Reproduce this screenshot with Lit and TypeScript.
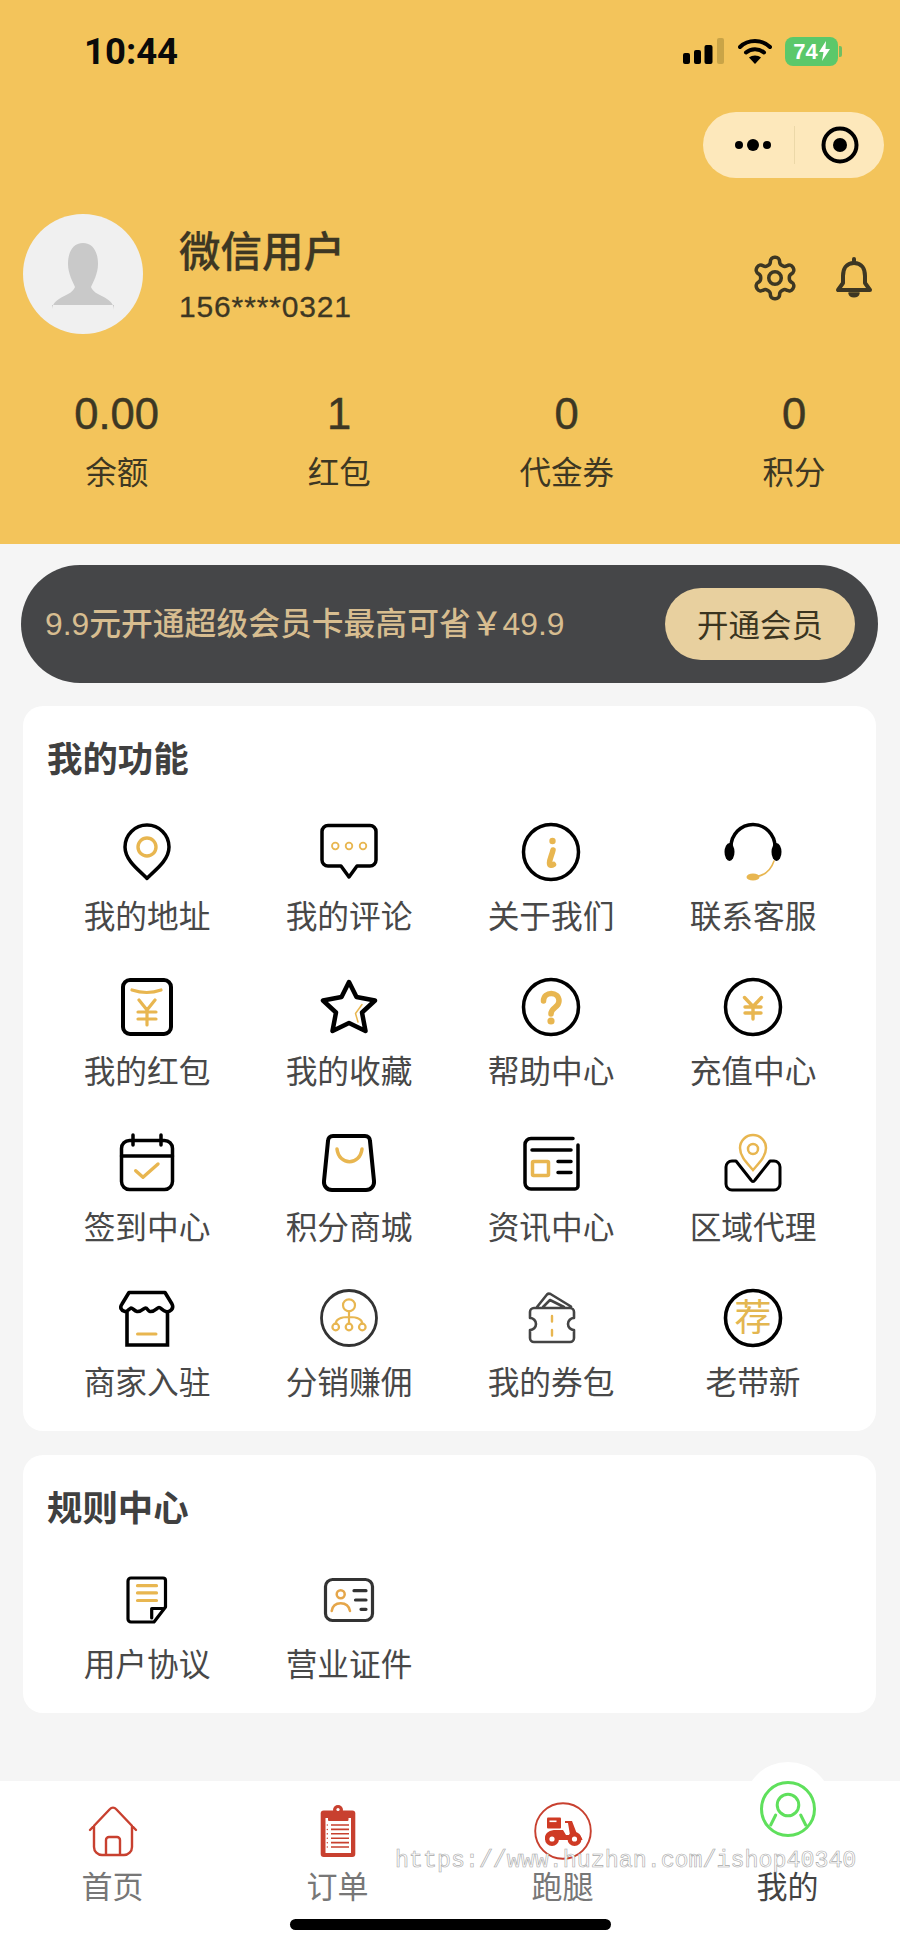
import { LitElement, html, css, svg } from "lit";
import { customElement } from "lit/decorators.js";

const K = "#000";
const G = "#e8b650";
const R = "#c8402f";

const g = (strokeColor: string, w: number, content: unknown) =>
  svg`<g fill="none" stroke=${strokeColor} stroke-width=${w} stroke-linecap="round" stroke-linejoin="round">${content}</g>`;

const icons: Record<string, unknown> = {
  addr: svg`${g(K, 3.5, svg`<path d="M30 56.5C26 51 8 40 8 25a22 22 0 0 1 44 0C52 40 34 51 30 56.5Z"/>`)}${g(G, 3.4, svg`<circle cx="30" cy="25" r="9"/>`)}`,
  comment: svg`${g(K, 3.5, svg`<path d="M9 3.5H51a6 6 0 0 1 6 6V38a6 6 0 0 1-6 6H38L30 55 22 44H9a6 6 0 0 1-6-6V9.5a6 6 0 0 1 6-6Z"/>`)}${g(G, 1.8, svg`<circle cx="16.3" cy="24" r="3.3"/><circle cx="30" cy="24" r="3.3"/><circle cx="44" cy="24" r="3.3"/>`)}`,
  info: svg`${g(K, 3.5, svg`<circle cx="30" cy="30" r="27.5"/>`)}<circle cx="31.5" cy="19" r="3.2" fill=${G}/>${g(G, 5.5, svg`<path d="M32 28C31 33 28.5 37 28.5 41C28.5 44 31 43.5 32.5 42.5"/>`)}`,
  headset: svg`${g(K, 3.5, svg`<path d="M8 25A22 22.5 0 0 1 52 25"/>`)}<ellipse cx="6.5" cy="30" rx="5" ry="9" fill=${K}/><ellipse cx="53.5" cy="30" rx="5" ry="9" fill=${K}/>${g(G, 1.6, svg`<path d="M51 39C48 48 42 53 34 54.5"/>`)}<ellipse cx="30" cy="55" rx="6.5" ry="3.6" fill=${G}/>`,
  packet: svg`${g(K, 4, svg`<rect x="6" y="3" width="48" height="54" rx="7"/>`)}${g(G, 3.2, svg`<path d="M15 13Q30 18 44 13M22 23L30 33L38 23M21 35H39M21 42H39M30 33V48"/>`)}`,
  star: svg`${g(K, 4.5, svg`<path d="M30 5L37.5 20L56 23.5L43 35.5L46.5 54L30 46L13.5 54L17 35.5L4 23.5L22.5 20Z"/>`)}${g(G, 1.5, svg`<path d="M43 27.5L36.5 36.5L39 45"/>`)}`,
  help: svg`${g(K, 3.5, svg`<circle cx="30" cy="30" r="27.5"/>`)}${g(G, 5.5, svg`<path d="M22.5 24C22.5 14 38 14 38 24C38 31 30 30 30 37"/>`)}<circle cx="30" cy="44" r="3.6" fill=${G}/>`,
  recharge: svg`${g(K, 3.5, svg`<circle cx="30" cy="30" r="27.5"/>`)}${g(G, 3.4, svg`<path d="M21.5 20.5L30 29.5L38.5 20.5M22 30H38M22 36H38M30 29.5V42"/>`)}`,
  calendar: svg`${g(K, 3.5, svg`<rect x="4.5" y="7.5" width="51" height="49" rx="8"/><path d="M4.5 23H55.5M16 2V12M44 2V12"/>`)}${g(G, 3.4, svg`<path d="M18.7 37.7L26 44.3L41 31"/>`)}`,
  bag: svg`${g(K, 4, svg`<path d="M14 3H46C49 3 51 5 51 8L55 48C55.5 53 52 57 47 57H13C8 57 4.5 53 5 48L9 8C9 5 11 3 14 3Z"/>`)}${g(G, 3.5, svg`<path d="M18 16C20 33 41 33 43 16"/>`)}`,
  news: svg`${g(K, 3.5, svg`<path d="M52 5.5H10a6 6 0 0 0-6 6V50a6 6 0 0 0 6 6H54a3 3 0 0 0 3-3V12M11 17H50M37 28.5H50M37 39.5H50"/>`)}${g(G, 3.5, svg`<rect x="11.5" y="28.5" width="16" height="14" rx="1"/>`)}`,
  agent: svg`${g(K, 3, svg`<path d="M9 28H13L28 47Q30 50 32 47L47 28H51a6 6 0 0 1 6 6V51a6 6 0 0 1-6 6H9a6 6 0 0 1-6-6V34a6 6 0 0 1 6-6Z"/>`)}<g fill="#fff" stroke=${G} stroke-width="2.5"><path d="M30 37C25 31 17 24 17 15a13 13 0 0 1 26 0C43 24 35 31 30 37Z"/><circle cx="30" cy="16" r="5"/></g>`,
  store: svg`${g(K, 3.6, svg`<path d="M12 4.5H48L55 16C57.5 20.5 53 24.5 49 23.5C45.5 22.5 44 19.5 42 19.5C40 19.5 38 24 33 23.5C31 23.2 30.5 20 28.5 20C26.5 20 25 24 20 23.5C17 23 16 20 14 20C12 21 10 24 8 23.5C4 22.5 2.5 19.5 5 16Z"/><path d="M10 24V57H50.5V24" stroke-linecap="butt" stroke-linejoin="miter"/>`)}${g(G, 3, svg`<path d="M20.5 46H39"/>`)}`,
  share: svg`${g("#333", 2.8, svg`<circle cx="30" cy="30" r="27.5"/>`)}${g(G, 2.2, svg`<circle cx="30" cy="17.3" r="6"/><circle cx="16.7" cy="39" r="3.3"/><circle cx="30" cy="39" r="3.3"/><circle cx="43.3" cy="39" r="3.3"/><path d="M30 23.3V35.7M16.7 35.7C17 30 24 29 30 29C36 29 43 30 43.3 35.7"/>`)}`,
  wallet: svg`${g("#444", 2.6, svg`<path d="M13 20H49a4 4 0 0 1 4 4V30a6 6 0 0 0 0 12V50a4 4 0 0 1-4 4H13a4 4 0 0 1-4-4V42a6 6 0 0 0 0-12V24a4 4 0 0 1 4-4ZM16 19L26 6.5Q27.5 5 29.5 6L50 18.5M22 19L29 12L43 19"/>`)}${g(G, 2.4, svg`<path d="M31 28V33.5M31 42V47.5"/>`)}`,
  recommend: svg`${g(K, 3.6, svg`<circle cx="30" cy="30" r="27.5"/>`)}<text class="rec" x="30" y="43" text-anchor="middle" fill="#e3b650">荐</text>`,
  doc: svg`${g(K, 3.2, svg`<path d="M14 8H46a2.5 2.5 0 0 1 2.5 2.5V37L37 52H14a3 3 0 0 1-3-3V11a3 3 0 0 1 3-3ZM34.7 48V38.5H45.5"/>`)}${g(G, 3.2, svg`<path d="M20.5 15.7H39.5M20.5 22.9H39.5M20.5 30.5H39.5"/>`)}`,
  license: svg`${g("#333", 3.2, svg`<rect x="6.5" y="9.5" width="47" height="41" rx="7"/><path d="M35 20.7H47M36.5 30H47M42 39.3H47"/>`)}${g("#e5a64a", 2.5, svg`<circle cx="21.7" cy="24.3" r="4"/><path d="M12.7 41C13.5 36 17 33.3 21.7 33.3C26.5 33.3 30 36 31 41"/>`)}`,
  home: g(R, 2.4, svg`<path d="M7 29L27 8a4 4 0 0 1 6 0L53 29M11 25V46a8 8 0 0 0 8 8H41a8 8 0 0 0 8-8V25M23 54V39a3 3 0 0 1 3-3H34a3 3 0 0 1 3 3V54"/>`),
  orders: svg`<rect x="12.7" y="9.5" width="34.6" height="46.5" rx="3" fill=${R}/><rect x="17.5" y="17" width="25.5" height="35" fill="#fff"/><circle cx="30" cy="9" r="5" fill=${R}/><circle cx="30" cy="8.5" r="1.6" fill="#fff"/><rect x="20" y="13" width="20.5" height="7" rx="1" fill=${R}/>${g(R, 1.6, svg`<path d="M23 24H41M23 28.4H41M23 32.8H41M23 37.2H41M23 41.6H41M23 46H41" stroke-linecap="butt"/><path d="M19.3 24V24.1M19.3 28.4V28.5M19.3 32.8V32.9M19.3 37.2V37.3M19.3 41.6V41.7M19.3 46V46.1" stroke-width="1.4"/>`)}`,
  runner: svg`${g(R, 1.9, svg`<circle cx="30" cy="30" r="27.8"/>`)}<g fill="#cf3a24"><rect x="14" y="16.5" width="14" height="11" rx="1"/><path d="M12 37C12 31.5 17 29 23 29H30L33 34H37L35 22H32V20H39L44 33C47 34 49 36 49.5 39H12Z"/><circle cx="19" cy="38" r="7"/><circle cx="41.5" cy="38" r="7"/></g><g fill="#fff"><rect x="16.5" y="19.5" width="7" height="1.6"/><circle cx="19" cy="38" r="2.6"/><circle cx="41.5" cy="38" r="2.6"/></g>`,
  me: g("#5fe05c", 3, svg`<circle cx="30" cy="30" r="26.5"/><circle cx="30" cy="26" r="10.8"/><path d="M17.7 36L12.7 46M42.7 36L47.7 46"/>`),
};

const fn = [
  ["addr", "我的地址"], ["comment", "我的评论"], ["info", "关于我们"], ["headset", "联系客服"],
  ["packet", "我的红包"], ["star", "我的收藏"], ["help", "帮助中心"], ["recharge", "充值中心"],
  ["calendar", "签到中心"], ["bag", "积分商城"], ["news", "资讯中心"], ["agent", "区域代理"],
  ["store", "商家入驻"], ["share", "分销赚佣"], ["wallet", "我的券包"], ["recommend", "老带新"],
];
const rules = [["doc", "用户协议"], ["license", "营业证件"]];
const stats = [["0.00", "余额"], ["1", "红包"], ["0", "代金券"], ["0", "积分"]];
const tabs = [["home", "首页"], ["orders", "订单"], ["runner", "跑腿"], ["me", "我的"]];

@customElement("app-root")
export class AppRoot extends LitElement {
  static styles = css`
    :host {
      display: block; position: relative; width: 900px; height: 1947px; overflow: hidden;
      background: #f5f5f5; color: #444;
      font-family: "Liberation Sans", "Noto Sans CJK SC", sans-serif;
    }
    svg { display: block; }
    .rec { font: 400 37px "Noto Sans CJK SC", sans-serif; }
    .header { height: 544px; box-sizing: border-box; background: #f3c45b; padding-top: 36px; color: #3d3723; }
    .status { height: 30px; display: flex; align-items: center; justify-content: space-between; padding: 0 62px 0 84px; }
    .time { font-size: 36.5px; font-weight: 700; color: #0a0a0a; line-height: 30px; padding-top: 2px; font-family: "Roboto", "Liberation Sans", sans-serif; }
    .sys { display: flex; align-items: center; gap: 13px; }
    .battery { width: 53px; height: 29px; border-radius: 8px; background: #5bc86a; color: #fff; position: relative;
      display: flex; align-items: center; justify-content: center; gap: 1px; font-size: 22px; font-weight: 700; line-height: 29px; }
    .battery::after { content: ""; position: absolute; right: -4px; top: 9px; width: 3px; height: 11px; border-radius: 0 2px 2px 0; background: #6fbf62; }
    .capsule-row { display: flex; justify-content: flex-end; padding-right: 16px; margin-top: 46px; }
    .capsule { width: 181px; height: 66px; border-radius: 33px; background: #fde8bb; display: flex; align-items: center; box-sizing: border-box; }
    .capsule .dots { width: 91px; display: flex; justify-content: flex-end; padding-right: 19px; box-sizing: border-box; }
    .capsule .sep { width: 1px; height: 38px; background: #ecd8a8; }
    .capsule .target { flex: 1; display: flex; justify-content: center; }
    .profile { display: flex; align-items: center; margin-top: 36px; padding: 0 27px 0 23px; height: 120px; }
    .avatar { width: 120px; height: 120px; border-radius: 50%; background: #f0f0f0; flex: none; overflow: hidden; }
    .who { margin-left: 36px; flex: 1; padding-top: 4px; }
    .name { font-size: 41.5px; line-height: 50px; font-weight: 500; -webkit-text-stroke: 0.3px #3d3723; }
    .phone { font-size: 30px; line-height: 36px; margin-top: 11px; letter-spacing: 0.85px; -webkit-text-stroke: 0.3px #3d3723; }
    .actions { display: flex; align-items: center; gap: 35px; margin-top: 8px; }
    .stats { display: flex; justify-content: space-around; margin-top: 54px; }
    .stat { text-align: center; }
    .val { font-size: 43.5px; line-height: 52px; -webkit-text-stroke: 0.5px #3d3723; }
    .lab { font-size: 31.5px; line-height: 44px; margin-top: 11px; }
    .banner { margin: 21px 22px 0 21px; height: 118px; border-radius: 59px; background: #454648; display: flex; align-items: center;
      justify-content: space-between; padding: 0 23px 0 24px; }
    .banner span { color: #d7bd90; font-size: 31.8px; line-height: 44px; white-space: nowrap; font-weight: 500; }
    .btn { width: 190px; height: 72px; border-radius: 36px; background: #e8d09f; color: #3a3420; font-size: 31.5px;
      display: flex; align-items: center; justify-content: center; padding-bottom: 3px; box-sizing: border-box; }
    .card { margin: 0 24px 0 23px; background: #fff; border-radius: 20px; padding: 32px 0 26px; }
    .card.first { margin-top: 23px; }
    .card.second { margin-top: 24px; }
    .title { font-size: 35.4px; line-height: 44px; font-weight: 700; padding-left: 24px; color: #404040; }
    .grid { display: grid; grid-template-columns: repeat(4, 202px); padding-left: 23px; row-gap: 38.3px; margin-top: 40px; }
    .grid.short { margin-top: 39px; }
    .item { display: flex; flex-direction: column; align-items: center; }
    .item .t { font-size: 31.7px; line-height: 44px; margin-top: 13px; white-space: nowrap; color: #484848; }
    .tabbar { margin-top: 68px; height: 166px; background: #fff; display: grid; grid-template-columns: repeat(4, 225px); }
    .tab { display: flex; flex-direction: column; align-items: center; padding-top: 20px; position: relative; }
    .tab .t { font-size: 31px; line-height: 40px; margin-top: 7px; color: #777; }
    .tab.on .t { color: #444; }
    .tab.on svg { position: relative; top: -22px; }
    .bump { position: absolute; left: 68.5px; top: -19px; width: 88px; height: 88px; border-radius: 50%; background: #fff; }
    .indicator { position: absolute; left: 290px; top: 1919px; width: 321px; height: 11px; border-radius: 6px; background: #000; }
    .mark { position: absolute; left: 395px; top: 1845px; font: 400 23.3px/32px "Liberation Mono", monospace; color: #fff;
      -webkit-text-stroke: 0.6px #a8a8a8; white-space: nowrap; }
  `;

  private item(i: string[]) {
    return html`<div class="item">
      <svg width="60" height="60" viewBox="0 0 60 60">${icons[i[0]]}</svg>
      <div class="t">${i[1]}</div>
    </div>`;
  }

  render() {
    return html`
      <div class="header">
        <div class="status">
          <div class="time">10:44</div>
          <div class="sys">
            <svg width="42" height="26" viewBox="0 0 42 26">
              <rect x="0" y="15" width="7" height="11" rx="2" fill="#000"/>
              <rect x="11" y="12" width="7" height="14" rx="2" fill="#000"/>
              <rect x="21.5" y="7" width="8" height="19" rx="2" fill="#000"/>
              <rect x="34" y="0" width="7" height="26" rx="2" fill="#c9a447"/>
            </svg>
            <svg width="34" height="26" viewBox="0 0 34 26">
              <g fill="none" stroke="#000" stroke-width="4" stroke-linecap="round">
                <path d="M2 9C10 1 24 1 32 9"/><path d="M8 14.5C13 10 21 10 26 14.5"/>
              </g>
              <path d="M17 26L11 19.5C14 16.8 20 16.8 23 19.5Z" fill="#000"/>
            </svg>
            <div class="battery"><span>74</span><svg width="11" height="20" viewBox="0 0 11 20"><path d="M7 0L0 11H4.5L3 20L11 8H6.5Z" fill="#fff"/></svg></div>
          </div>
        </div>
        <div class="capsule-row">
          <div class="capsule">
            <div class="dots"><svg width="42" height="14" viewBox="0 0 42 14"><circle cx="6" cy="7" r="4" fill="#000"/><circle cx="20" cy="7" r="6" fill="#000"/><circle cx="34" cy="7" r="4" fill="#000"/></svg></div>
            <div class="sep"></div>
            <div class="target"><svg width="38" height="38" viewBox="0 0 38 38"><circle cx="19" cy="19" r="16.5" fill="none" stroke="#000" stroke-width="4"/><circle cx="19" cy="19" r="7" fill="#000"/></svg></div>
          </div>
        </div>
        <div class="profile">
          <div class="avatar">
            <svg width="120" height="120" viewBox="0 0 120 120">
              <path d="M60 29C50 29 45 38 45 50C45 60 50 68 52 73C50 79 42 81 36 85C31 88 29 92 29 96V91H91V96C91 92 89 88 84 85C78 81 70 79 68 73C70 68 75 60 75 50C75 38 70 29 60 29Z" fill="#c9c9c9"/>
            </svg>
          </div>
          <div class="who">
            <div class="name">微信用户</div>
            <div class="phone">156****0321</div>
          </div>
          <div class="actions">
            <svg width="50" height="50" viewBox="0 0 24 24" fill="none" stroke="#3d3723" stroke-width="1.7" stroke-linecap="round" stroke-linejoin="round"><path d="M12.22 2h-.44a2 2 0 0 0-2 2v.18a2 2 0 0 1-1 1.73l-.43.25a2 2 0 0 1-2 0l-.15-.08a2 2 0 0 0-2.73.73l-.22.38a2 2 0 0 0 .73 2.73l.15.1a2 2 0 0 1 1 1.72v.51a2 2 0 0 1-1 1.74l-.15.09a2 2 0 0 0-.73 2.73l.22.38a2 2 0 0 0 2.73.73l.15-.08a2 2 0 0 1 2 0l.43.25a2 2 0 0 1 1 1.73V20a2 2 0 0 0 2 2h.44a2 2 0 0 0 2-2v-.18a2 2 0 0 1 1-1.73l.43-.25a2 2 0 0 1 2 0l.15.08a2 2 0 0 0 2.73-.73l.22-.39a2 2 0 0 0-.73-2.73l-.15-.08a2 2 0 0 1-1-1.74v-.5a2 2 0 0 1 1-1.74l.15-.09a2 2 0 0 0 .73-2.73l-.22-.38a2 2 0 0 0-2.73-.73l-.15.08a2 2 0 0 1-2 0l-.43-.25a2 2 0 0 1-1-1.73V4a2 2 0 0 0-2-2z"/><circle cx="12" cy="12" r="3"/></svg>
            <svg width="38" height="42" viewBox="0 0 38 42" fill="none" stroke="#3d3723" stroke-width="4" stroke-linejoin="round"><path d="M19 6C11 6 8 12 8 19V26L3 33H35L30 26V19C30 12 27 6 19 6Z"/><path d="M19 5V2" stroke-linecap="round"/><path d="M14 36C15 41 23 41 24 36Z" fill="#3d3723" stroke-width="1.5"/></svg>
          </div>
        </div>
        <div class="stats">
          ${stats.map((s) => html`<div class="stat"><div class="val">${s[0]}</div><div class="lab">${s[1]}</div></div>`)}
        </div>
      </div>

      <div class="banner">
        <span>9.9元开通超级会员卡最高可省￥49.9</span>
        <div class="btn">开通会员</div>
      </div>

      <div class="card first">
        <div class="title">我的功能</div>
        <div class="grid">${fn.map((i) => this.item(i))}</div>
      </div>
      <div class="card second">
        <div class="title">规则中心</div>
        <div class="grid short">${rules.map((i) => this.item(i))}</div>
      </div>

      <div class="tabbar">
        ${tabs.map((t, i) => html`<div class="tab ${i === 3 ? "on" : ""}">
          ${i === 3 ? html`<div class="bump"></div>` : ""}
          <svg width="60" height="60" viewBox="0 0 60 60">${icons[t[0]]}</svg>
          <div class="t">${t[1]}</div>
        </div>`)}
      </div>

      <div class="indicator"></div>
      <div class="mark">https://www.huzhan.com/ishop40340</div>
    `;
  }
}
